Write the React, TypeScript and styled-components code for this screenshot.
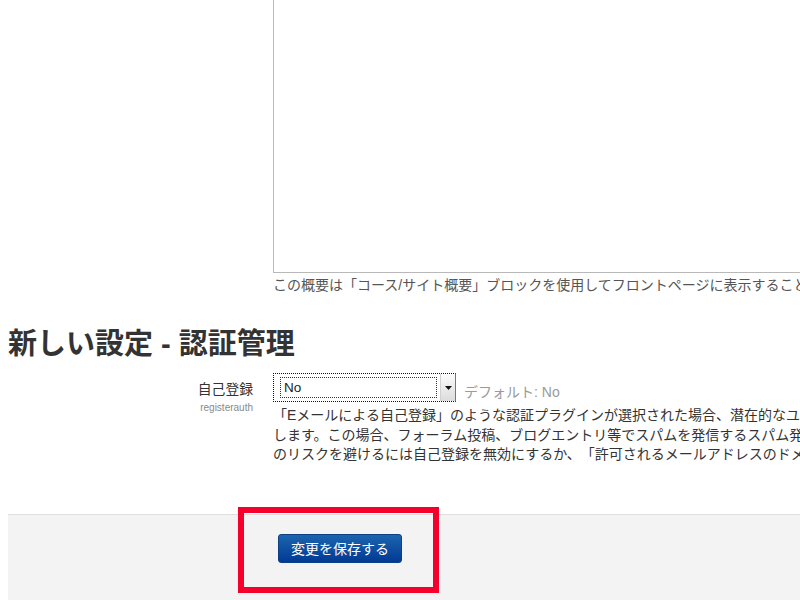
import React from "react";
import styled, { createGlobalStyle } from "styled-components";

const GlobalStyle = createGlobalStyle`
  html, body {
    margin: 0;
    padding: 0;
    overflow: hidden;
    background: #fff;
  }
  body {
    padding: 0 0 0 8px;
    font-family: "Liberation Sans", "Noto Sans CJK JP", sans-serif;
    color: #333;
    text-spacing-trim: space-all;
  }
`;

const Page = styled.div`
  position: relative;
  width: 1100px;
  height: 600px;
`;

const FormRow = styled.div`
  display: grid;
  grid-template-columns: 245px 1fr;
  column-gap: 20px;
`;

const LabelCol = styled.div`
  text-align: right;
  padding-top: 7px;
`;

const LabelText = styled.div`
  font-size: 13.8px;
  line-height: 20px;
  color: #333;
`;

const LabelKey = styled.div`
  font-size: 10px;
  line-height: 14px;
  color: #8a8a8a;
  margin-top: 1px;
`;

const Content = styled.div`
  display: flex;
  flex-direction: column;
  min-width: 0;
`;

const TextArea = styled.div`
  width: 820px;
  height: 272px;
  border: 1px solid #b9b9b9;
  border-top: none;
  background: #fff;
`;

const HelpText = styled.div`
  font-size: 14px;
  line-height: 18px;
  color: #555;
  white-space: nowrap;
  margin-top: 3px;
`;

const Heading = styled.h2`
  margin: 33px 0 12px 0;
  font-size: 29px;
  line-height: 34px;
  font-weight: bold;
  color: #333;
  font-family: "Liberation Sans", "Noto Sans CJK JP", sans-serif;
`;

const SelectLine = styled.div`
  display: flex;
  align-items: center;
  gap: 8px;
`;

const SelectBox = styled.div`
  display: flex;
  width: 183px;
  height: 29px;
  box-sizing: border-box;
  border: 1px dotted #111;
  border-right: 1px solid #777;
  background: #fff;
`;

const SelectValue = styled.div`
  flex: 1;
  margin: 3px 3px 3px 6px;
  border: 1px dotted #333;
  display: flex;
  align-items: center;
  padding-left: 3px;
  font-size: 13.5px;
  color: #222;
`;

const SelectArrow = styled.div`
  width: 14px;
  background: linear-gradient(#fbfbfb, #dcdcdc);
  border-left: 1px solid #d0d0d0;
  display: flex;
  align-items: center;
  justify-content: center;
`;

const DefaultText = styled.span`
  font-size: 14px;
  color: #9a9a9a;
  margin-top: 6px;
`;

const Description = styled.div`
  margin-top: 4px;
  font-size: 14px;
  line-height: 19.5px;
  color: #333;
  white-space: nowrap;
`;

const Footer = styled.div`
  margin-top: 49px;
  border-top: 1px solid #dedede;
  background: #f3f3f3;
  height: 120px;
  display: grid;
  grid-template-columns: 270px 1fr;
  padding-top: 19px;
  box-sizing: border-box;
`;

const SaveButton = styled.button`
  grid-column: 2;
  justify-self: start;
  width: 124px;
  height: 29px;
  border: 1px solid #0b3f86;
  border-radius: 3px;
  background: linear-gradient(#1c64ae, #003a94);
  color: #fff;
  font-size: 14px;
  font-family: "Liberation Sans", "Noto Sans CJK JP", sans-serif;
  cursor: pointer;
  padding: 0;
`;

const Highlight = styled.div`
  position: absolute;
  left: 230px;
  top: 507px;
  width: 201px;
  height: 86px;
  box-sizing: border-box;
  border: 6px solid #f5002c;
  pointer-events: none;
`;

export default function App() {
  return (
    <>
      <GlobalStyle />
      <Page>
        <FormRow>
          <div />
          <Content>
            <TextArea />
            <HelpText>
              この概要は「コース/サイト概要」ブロックを使用してフロントページに表示することができます。
            </HelpText>
          </Content>
        </FormRow>

        <Heading>新しい設定 - 認証管理</Heading>

        <FormRow>
          <LabelCol>
            <LabelText>自己登録</LabelText>
            <LabelKey>registerauth</LabelKey>
          </LabelCol>
          <Content>
            <SelectLine>
              <SelectBox>
                <SelectValue>No</SelectValue>
                <SelectArrow>
                  <svg width="7" height="4" viewBox="0 0 7 4">
                    <path d="M0 0 L7 0 L3.5 4 Z" fill="#111" />
                  </svg>
                </SelectArrow>
              </SelectBox>
              <DefaultText>デフォルト: No</DefaultText>
            </SelectLine>
            <Description>
              「Eメールによる自己登録」のような認証プラグインが選択された場合、潜在的なユーザが自分でアカウントを作成できるようになります。
              <br />
              します。この場合、フォーラム投稿、ブログエントリ等でスパムを発信するスパム発信者がアカウントを作成する可能性があります。
              <br />
              のリスクを避けるには自己登録を無効にするか、「許可されるメールアドレスのドメイン」設定で制限してください。
            </Description>
          </Content>
        </FormRow>

        <Footer>
          <SaveButton>変更を保存する</SaveButton>
        </Footer>

        <Highlight />
      </Page>
    </>
  );
}
